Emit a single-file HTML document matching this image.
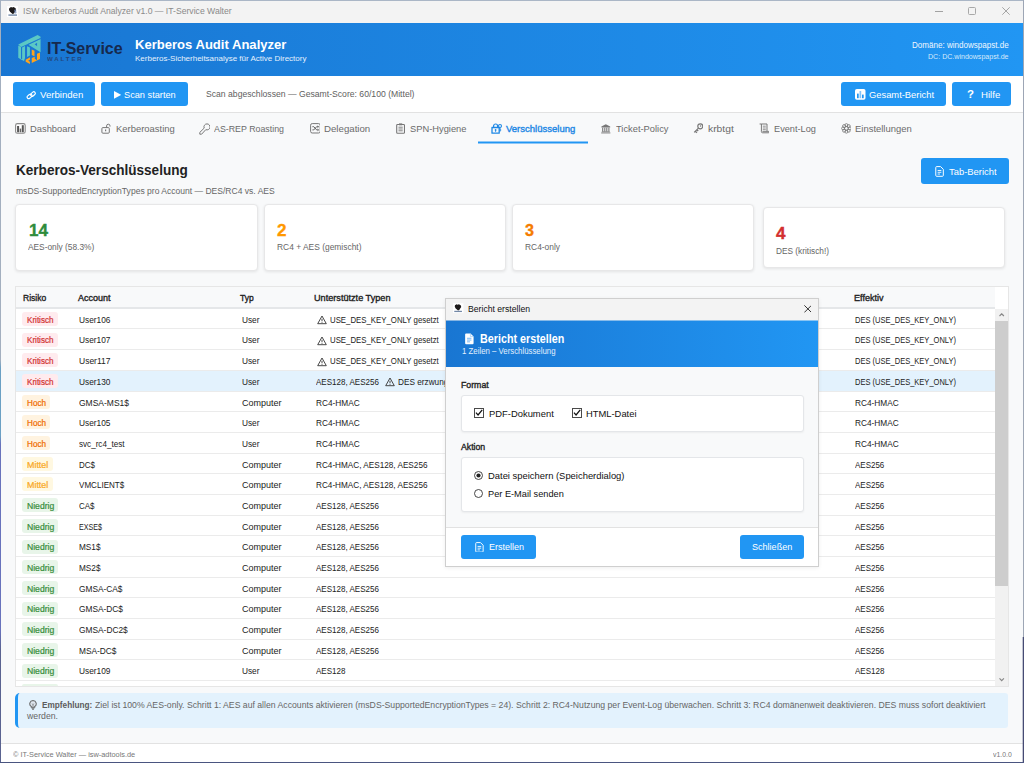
<!DOCTYPE html>
<html lang="de"><head><meta charset="utf-8"><title>ISW Kerberos Audit Analyzer</title>
<style>
*{box-sizing:border-box;margin:0;padding:0}
html,body{width:1024px;height:763px;overflow:hidden;background:#f8f9fa;font-family:"Liberation Sans",sans-serif}
#w{position:absolute;left:0;top:0;width:1024px;height:763px;overflow:hidden;background:#f8f9fa}
.ab,.t,.bx,.bd,.btn{position:absolute}
.t{white-space:pre;transform-origin:0 50%;display:block}
.btn{background:#2196f3;border-radius:3px}
.bd{height:14px;border-radius:3px}
.card{position:absolute;background:#fff;border:1px solid #e7e7e8;border-radius:4px;box-shadow:0 1px 3px rgba(0,0,0,.09)}
.rl{position:absolute;left:16px;width:979px;height:1px;background:#ebebeb}
</style></head><body><div id="w">
<!-- title bar -->
<div class="ab" style="left:0;top:0;width:1024px;height:23px;background:#f3f3f3"></div>
<!-- header -->
<div class="ab" style="left:0;top:23px;width:1024px;height:53px;background:linear-gradient(90deg,#1976d2 0%,#2196f3 100%)"></div>
<!-- toolbar -->
<div class="ab" style="left:0;top:76px;width:1024px;height:37px;background:#fff;border-bottom:1px solid #e2e2e2"></div>
<div class="btn" style="left:13px;top:82px;width:82px;height:24px"></div>
<div class="btn" style="left:101px;top:82px;width:87px;height:24px"></div>
<div class="btn" style="left:841px;top:82px;width:105px;height:24px"></div>
<div class="btn" style="left:952px;top:82px;width:59px;height:24px"></div>
<!-- tabs -->
<div class="ab" style="left:478px;top:141px;width:109.5px;height:3px;background:rgba(33,150,243,.5)"></div><div class="ab" style="left:478px;top:142px;width:109.5px;height:1px;background:#2196f3"></div>
<!-- tab-bericht -->
<div class="btn" style="left:921px;top:158px;width:87.5px;height:26px"></div>
<!-- cards -->
<div class="card" style="left:15px;top:204px;width:243px;height:66.5px"></div>
<div class="card" style="left:264px;top:204px;width:242px;height:66.5px"></div>
<div class="card" style="left:512px;top:204px;width:242px;height:66.5px"></div>
<div class="card" style="left:763px;top:207px;width:242px;height:61px"></div>
<!-- table -->
<div class="ab" style="left:15px;top:286px;width:994px;height:400.5px;background:#fff;border:1px solid #e6e6e6;overflow:hidden"></div>
<div class="ab" style="left:16px;top:287px;width:979px;height:20.5px;background:#f8f9fa"></div>
<div class="ab" style="left:16px;top:307px;width:979px;height:2px;background:#e5e7e9"></div>
<div class="ab" style="left:16px;top:371px;width:979px;height:20px;background:#e3f2fd"></div>
<div class="rl" style="top:328px"></div><div class="rl" style="top:349px"></div><div class="rl" style="top:370px"></div><div class="rl" style="top:391px"></div><div class="rl" style="top:411px"></div><div class="rl" style="top:432px"></div><div class="rl" style="top:453px"></div><div class="rl" style="top:473px"></div><div class="rl" style="top:494px"></div><div class="rl" style="top:515px"></div><div class="rl" style="top:535px"></div><div class="rl" style="top:556px"></div><div class="rl" style="top:577px"></div><div class="rl" style="top:597px"></div><div class="rl" style="top:618px"></div><div class="rl" style="top:639px"></div><div class="rl" style="top:659px"></div><div class="rl" style="top:680px"></div>
<!-- scrollbar -->
<div class="ab" style="left:995px;top:309px;width:13px;height:377px;background:#f1f1f1"></div>
<div class="ab" style="left:995px;top:321px;width:13px;height:264.5px;background:#cdcdcd"></div>
<div class="bd" style="left:22px;top:312px;width:36px;background:#ffebee"></div><svg class="ab" style="left:316.5px;top:315.25px" width="10" height="10" viewBox="0 0 10 10"><path d="M5 1 L9.3 8.7 H0.7 Z" fill="none" stroke="#333" stroke-width="0.9" stroke-linejoin="round"/><path d="M5 3.8V6.3M5 7.2V7.9" stroke="#333" stroke-width="0.9"/></svg><div class="bd" style="left:22px;top:333px;width:36px;background:#ffebee"></div><svg class="ab" style="left:316.5px;top:335.94px" width="10" height="10" viewBox="0 0 10 10"><path d="M5 1 L9.3 8.7 H0.7 Z" fill="none" stroke="#333" stroke-width="0.9" stroke-linejoin="round"/><path d="M5 3.8V6.3M5 7.2V7.9" stroke="#333" stroke-width="0.9"/></svg><div class="bd" style="left:22px;top:353px;width:36px;background:#ffebee"></div><svg class="ab" style="left:316.5px;top:356.63px" width="10" height="10" viewBox="0 0 10 10"><path d="M5 1 L9.3 8.7 H0.7 Z" fill="none" stroke="#333" stroke-width="0.9" stroke-linejoin="round"/><path d="M5 3.8V6.3M5 7.2V7.9" stroke="#333" stroke-width="0.9"/></svg><div class="bd" style="left:22px;top:374px;width:36px;background:#ffebee"></div><svg class="ab" style="left:384.5px;top:377.32px" width="10" height="10" viewBox="0 0 10 10"><path d="M5 1 L9.3 8.7 H0.7 Z" fill="none" stroke="#333" stroke-width="0.9" stroke-linejoin="round"/><path d="M5 3.8V6.3M5 7.2V7.9" stroke="#333" stroke-width="0.9"/></svg><div class="bd" style="left:22px;top:395px;width:28px;background:#fff3e0"></div><div class="bd" style="left:22px;top:415px;width:28px;background:#fff3e0"></div><div class="bd" style="left:22px;top:436px;width:28px;background:#fff3e0"></div><div class="bd" style="left:22px;top:457px;width:31px;background:#fff8e1"></div><div class="bd" style="left:22px;top:477px;width:31px;background:#fff8e1"></div><div class="bd" style="left:22px;top:498px;width:36px;background:#e8f5e9"></div><div class="bd" style="left:22px;top:519px;width:36px;background:#e8f5e9"></div><div class="bd" style="left:22px;top:540px;width:36px;background:#e8f5e9"></div><div class="bd" style="left:22px;top:560px;width:36px;background:#e8f5e9"></div><div class="bd" style="left:22px;top:581px;width:36px;background:#e8f5e9"></div><div class="bd" style="left:22px;top:602px;width:36px;background:#e8f5e9"></div><div class="bd" style="left:22px;top:622px;width:36px;background:#e8f5e9"></div><div class="bd" style="left:22px;top:643px;width:36px;background:#e8f5e9"></div><div class="bd" style="left:22px;top:664px;width:36px;background:#e8f5e9"></div><div class="ab" style="left:22px;top:684px;width:36px;height:2px;background:#e8f5e9;border-radius:2px 2px 0 0"></div>
<!-- recommendation -->
<div class="ab" style="left:15px;top:693px;width:993px;height:35px;background:#e3f2fd;border-left:3px solid #2196f3;border-radius:5px 3px 3px 5px"></div>
<!-- footer -->
<div class="ab" style="left:0;top:743px;width:1024px;height:20px;background:#fff;border-top:1px solid #e2e2e2"></div>
<span class="t" style="left:22.70px;top:4.30px;font-size:9.7px;line-height:14px;color:#8a8a8a;transform:scaleX(0.8904)">ISW Kerberos Audit Analyzer v1.0 — IT-Service Walter</span>
<span class="t" style="left:46.50px;top:37.80px;font-size:15.9px;line-height:22px;color:#16294d;transform:scaleX(1.0081);font-weight:700">IT-Service</span>
<span class="t" style="left:47.20px;top:56.10px;font-size:4.9px;line-height:7px;color:#23477e;transform:scaleX(1.2500);font-weight:700;letter-spacing:1.509px">WALTER</span>
<span class="t" style="left:135.40px;top:34.70px;font-size:13.5px;line-height:19px;color:#fff;transform:scaleX(0.9671);font-weight:700">Kerberos Audit Analyzer</span>
<span class="t" style="left:135.40px;top:53.10px;font-size:8.0px;line-height:11px;color:#e6f1fc;transform:scaleX(0.9987)">Kerberos-Sicherheitsanalyse für Active Directory</span>
<span class="t" style="left:911.75px;top:39.20px;font-size:8.8px;line-height:12px;color:#f0f7fe;transform:scaleX(0.9160)">Domäne: windowspapst.de</span>
<span class="t" style="left:928.00px;top:50.50px;font-size:7.6px;line-height:11px;color:#d6e9fb;transform:scaleX(0.9303)">DC: DC.windowspapst.de</span>
<span class="t" style="left:40.30px;top:87.60px;font-size:9.8px;line-height:14px;color:#fff;transform:scaleX(0.9813)">Verbinden</span>
<span class="t" style="left:123.90px;top:87.60px;font-size:9.8px;line-height:14px;color:#fff;transform:scaleX(0.9397)">Scan starten</span>
<span class="t" style="left:205.50px;top:88.40px;font-size:8.8px;line-height:12px;color:#606060;transform:scaleX(0.9802)">Scan abgeschlossen — Gesamt-Score: 60/100 (Mittel)</span>
<span class="t" style="left:869.25px;top:87.60px;font-size:9.8px;line-height:14px;color:#fff;transform:scaleX(0.9550)">Gesamt-Bericht</span>
<span class="t" style="left:967.25px;top:87.30px;font-size:11px;line-height:15px;color:#fff;transform:scaleX(1.0394);font-weight:700">?</span>
<span class="t" style="left:980.50px;top:87.60px;font-size:9.8px;line-height:14px;color:#fff;transform:scaleX(0.9817)">Hilfe</span>
<span class="t" style="left:30.00px;top:121.80px;font-size:9.8px;line-height:14px;color:#6b6b6b;transform:scaleX(0.9544)">Dashboard</span>
<span class="t" style="left:115.50px;top:121.80px;font-size:9.8px;line-height:14px;color:#6b6b6b;transform:scaleX(0.9631)">Kerberoasting</span>
<span class="t" style="left:214.00px;top:121.80px;font-size:9.8px;line-height:14px;color:#6b6b6b;transform:scaleX(0.9010)">AS-REP Roasting</span>
<span class="t" style="left:324.00px;top:121.80px;font-size:9.8px;line-height:14px;color:#6b6b6b;transform:scaleX(0.9873)">Delegation</span>
<span class="t" style="left:409.50px;top:121.80px;font-size:9.8px;line-height:14px;color:#6b6b6b;transform:scaleX(0.9518)">SPN-Hygiene</span>
<span class="t" style="left:615.50px;top:121.80px;font-size:9.8px;line-height:14px;color:#6b6b6b;transform:scaleX(0.9516)">Ticket-Policy</span>
<span class="t" style="left:707.50px;top:121.80px;font-size:9.8px;line-height:14px;color:#6b6b6b;transform:scaleX(1.0504)">krbtgt</span>
<span class="t" style="left:773.50px;top:121.80px;font-size:9.8px;line-height:14px;color:#6b6b6b;transform:scaleX(0.9402)">Event-Log</span>
<span class="t" style="left:855.00px;top:121.80px;font-size:9.8px;line-height:14px;color:#6b6b6b;transform:scaleX(0.9647)">Einstellungen</span>
<span class="t" style="left:506.00px;top:121.80px;font-size:9.8px;line-height:14px;color:#1e88e5;transform:scaleX(0.9707);-webkit-text-stroke:.4px #1e88e5">Verschlüsselung</span>
<span class="t" style="left:15.75px;top:158.70px;font-size:15px;line-height:21px;color:#222;transform:scaleX(0.9036);font-weight:700">Kerberos-Verschlüsselung</span>
<span class="t" style="left:15.75px;top:184.60px;font-size:8.3px;line-height:12px;color:#666;transform:scaleX(1.0295)">msDS-SupportedEncryptionTypes pro Account — DES/RC4 vs. AES</span>
<span class="t" style="left:949.25px;top:164.60px;font-size:9.8px;line-height:14px;color:#fff;transform:scaleX(0.9584)">Tab-Bericht</span>
<span class="t" style="left:29.00px;top:219.10px;font-size:16.4px;line-height:23px;color:#2e8c3c;transform:scaleX(1.0420);font-weight:700;-webkit-text-stroke:.35px #2e8c3c">14</span>
<span class="t" style="left:28.25px;top:241.40px;font-size:8.8px;line-height:12px;color:#666;transform:scaleX(0.9475)">AES-only (58.3%)</span>
<span class="t" style="left:276.50px;top:219.10px;font-size:16.4px;line-height:23px;color:#ff9800;transform:scaleX(1.0411);font-weight:700;-webkit-text-stroke:.35px #ff9800">2</span>
<span class="t" style="left:276.50px;top:241.40px;font-size:8.8px;line-height:12px;color:#666;transform:scaleX(0.9575)">RC4 + AES (gemischt)</span>
<span class="t" style="left:525.00px;top:219.10px;font-size:16.4px;line-height:23px;color:#f57c00;transform:scaleX(0.9863);font-weight:700;-webkit-text-stroke:.35px #f57c00">3</span>
<span class="t" style="left:525.00px;top:241.40px;font-size:8.8px;line-height:12px;color:#666;transform:scaleX(0.9544)">RC4-only</span>
<span class="t" style="left:776.00px;top:223.40px;font-size:15.8px;line-height:22px;color:#d32f2f;transform:scaleX(1.0799);font-weight:700;-webkit-text-stroke:.35px #d32f2f">4</span>
<span class="t" style="left:776.00px;top:244.80px;font-size:8.5px;line-height:12px;color:#666;transform:scaleX(0.9758)">DES (kritisch!)</span>
<span class="t" style="left:22.50px;top:291.80px;font-size:9.2px;line-height:13px;color:#222;transform:scaleX(0.9294);-webkit-text-stroke:.36px #222">Risiko</span>
<span class="t" style="left:77.75px;top:291.80px;font-size:9.2px;line-height:13px;color:#222;transform:scaleX(0.9788);-webkit-text-stroke:.36px #222">Account</span>
<span class="t" style="left:239.90px;top:291.80px;font-size:9.2px;line-height:13px;color:#222;transform:scaleX(0.9249);-webkit-text-stroke:.36px #222">Typ</span>
<span class="t" style="left:314.00px;top:291.80px;font-size:9.2px;line-height:13px;color:#222;transform:scaleX(0.9941);-webkit-text-stroke:.36px #222">Unterstützte Typen</span>
<span class="t" style="left:853.50px;top:291.80px;font-size:9.2px;line-height:13px;color:#222;transform:scaleX(0.9844);-webkit-text-stroke:.36px #222">Effektiv</span>
<span class="t" style="left:26.75px;top:313.75px;font-size:8.3px;line-height:12px;color:#d23434;transform:scaleX(0.9742);-webkit-text-stroke:.22px #d23434">Kritisch</span>
<span class="t" style="left:79.25px;top:313.75px;font-size:9px;line-height:13px;color:#222;transform:scaleX(0.9256)">User106</span>
<span class="t" style="left:241.50px;top:313.75px;font-size:9px;line-height:13px;color:#222;transform:scaleX(0.9203)">User</span>
<span class="t" style="left:330.25px;top:313.75px;font-size:9px;line-height:13px;color:#222;transform:scaleX(0.8684)">USE_DES_KEY_ONLY gesetzt</span>
<span class="t" style="left:855.00px;top:313.75px;font-size:9px;line-height:13px;color:#222;transform:scaleX(0.8355)">DES (USE_DES_KEY_ONLY)</span>
<span class="t" style="left:26.75px;top:334.44px;font-size:8.3px;line-height:12px;color:#d23434;transform:scaleX(0.9742);-webkit-text-stroke:.22px #d23434">Kritisch</span>
<span class="t" style="left:79.25px;top:334.44px;font-size:9px;line-height:13px;color:#222;transform:scaleX(0.9256)">User107</span>
<span class="t" style="left:241.50px;top:334.44px;font-size:9px;line-height:13px;color:#222;transform:scaleX(0.9203)">User</span>
<span class="t" style="left:330.25px;top:334.44px;font-size:9px;line-height:13px;color:#222;transform:scaleX(0.8684)">USE_DES_KEY_ONLY gesetzt</span>
<span class="t" style="left:855.00px;top:334.44px;font-size:9px;line-height:13px;color:#222;transform:scaleX(0.8355)">DES (USE_DES_KEY_ONLY)</span>
<span class="t" style="left:26.75px;top:355.13px;font-size:8.3px;line-height:12px;color:#d23434;transform:scaleX(0.9742);-webkit-text-stroke:.22px #d23434">Kritisch</span>
<span class="t" style="left:79.25px;top:355.13px;font-size:9px;line-height:13px;color:#222;transform:scaleX(0.9443)">User117</span>
<span class="t" style="left:241.50px;top:355.13px;font-size:9px;line-height:13px;color:#222;transform:scaleX(0.9203)">User</span>
<span class="t" style="left:330.25px;top:355.13px;font-size:9px;line-height:13px;color:#222;transform:scaleX(0.8684)">USE_DES_KEY_ONLY gesetzt</span>
<span class="t" style="left:855.00px;top:355.13px;font-size:9px;line-height:13px;color:#222;transform:scaleX(0.8355)">DES (USE_DES_KEY_ONLY)</span>
<span class="t" style="left:26.75px;top:375.82px;font-size:8.3px;line-height:12px;color:#d23434;transform:scaleX(0.9742);-webkit-text-stroke:.22px #d23434">Kritisch</span>
<span class="t" style="left:79.25px;top:375.82px;font-size:9px;line-height:13px;color:#222;transform:scaleX(0.9256)">User130</span>
<span class="t" style="left:241.50px;top:375.82px;font-size:9px;line-height:13px;color:#222;transform:scaleX(0.9203)">User</span>
<span class="t" style="left:315.50px;top:375.82px;font-size:9px;line-height:13px;color:#222;transform:scaleX(0.8928)">AES128, AES256</span>
<span class="t" style="left:398.00px;top:375.82px;font-size:9px;line-height:13px;color:#222;transform:scaleX(0.9147)">DES erzwungen</span>
<span class="t" style="left:855.00px;top:375.82px;font-size:9px;line-height:13px;color:#222;transform:scaleX(0.8355)">DES (USE_DES_KEY_ONLY)</span>
<span class="t" style="left:26.75px;top:396.51px;font-size:8.3px;line-height:12px;color:#ef6c00;transform:scaleX(0.9806);-webkit-text-stroke:.22px #ef6c00">Hoch</span>
<span class="t" style="left:79.25px;top:396.51px;font-size:9px;line-height:13px;color:#222;transform:scaleX(0.9431)">GMSA-MS1$</span>
<span class="t" style="left:241.50px;top:396.51px;font-size:9px;line-height:13px;color:#222;transform:scaleX(0.9996)">Computer</span>
<span class="t" style="left:315.50px;top:396.51px;font-size:9px;line-height:13px;color:#222;transform:scaleX(0.9207)">RC4-HMAC</span>
<span class="t" style="left:855.00px;top:396.51px;font-size:9px;line-height:13px;color:#222;transform:scaleX(0.9207)">RC4-HMAC</span>
<span class="t" style="left:26.75px;top:417.20px;font-size:8.3px;line-height:12px;color:#ef6c00;transform:scaleX(0.9806);-webkit-text-stroke:.22px #ef6c00">Hoch</span>
<span class="t" style="left:79.25px;top:417.20px;font-size:9px;line-height:13px;color:#222;transform:scaleX(0.9256)">User105</span>
<span class="t" style="left:241.50px;top:417.20px;font-size:9px;line-height:13px;color:#222;transform:scaleX(0.9203)">User</span>
<span class="t" style="left:315.50px;top:417.20px;font-size:9px;line-height:13px;color:#222;transform:scaleX(0.9207)">RC4-HMAC</span>
<span class="t" style="left:855.00px;top:417.20px;font-size:9px;line-height:13px;color:#222;transform:scaleX(0.9207)">RC4-HMAC</span>
<span class="t" style="left:26.75px;top:437.89px;font-size:8.3px;line-height:12px;color:#ef6c00;transform:scaleX(0.9806);-webkit-text-stroke:.22px #ef6c00">Hoch</span>
<span class="t" style="left:79.25px;top:437.89px;font-size:9px;line-height:13px;color:#222;transform:scaleX(0.9004)">svc_rc4_test</span>
<span class="t" style="left:241.50px;top:437.89px;font-size:9px;line-height:13px;color:#222;transform:scaleX(0.9203)">User</span>
<span class="t" style="left:315.50px;top:437.89px;font-size:9px;line-height:13px;color:#222;transform:scaleX(0.9207)">RC4-HMAC</span>
<span class="t" style="left:855.00px;top:437.89px;font-size:9px;line-height:13px;color:#222;transform:scaleX(0.9207)">RC4-HMAC</span>
<span class="t" style="left:26.75px;top:458.58px;font-size:8.3px;line-height:12px;color:#f9a825;transform:scaleX(1.0717);-webkit-text-stroke:.22px #f9a825">Mittel</span>
<span class="t" style="left:79.25px;top:458.58px;font-size:9px;line-height:13px;color:#222;transform:scaleX(0.8881)">DC$</span>
<span class="t" style="left:241.50px;top:458.58px;font-size:9px;line-height:13px;color:#222;transform:scaleX(0.9996)">Computer</span>
<span class="t" style="left:315.50px;top:458.58px;font-size:9px;line-height:13px;color:#222;transform:scaleX(0.9097)">RC4-HMAC, AES128, AES256</span>
<span class="t" style="left:855.00px;top:458.58px;font-size:9px;line-height:13px;color:#222;transform:scaleX(0.8855)">AES256</span>
<span class="t" style="left:26.75px;top:479.27px;font-size:8.3px;line-height:12px;color:#f9a825;transform:scaleX(1.0717);-webkit-text-stroke:.22px #f9a825">Mittel</span>
<span class="t" style="left:79.25px;top:479.27px;font-size:9px;line-height:13px;color:#222;transform:scaleX(0.8958)">VMCLIENT$</span>
<span class="t" style="left:241.50px;top:479.27px;font-size:9px;line-height:13px;color:#222;transform:scaleX(0.9996)">Computer</span>
<span class="t" style="left:315.50px;top:479.27px;font-size:9px;line-height:13px;color:#222;transform:scaleX(0.9097)">RC4-HMAC, AES128, AES256</span>
<span class="t" style="left:855.00px;top:479.27px;font-size:9px;line-height:13px;color:#222;transform:scaleX(0.8855)">AES256</span>
<span class="t" style="left:26.75px;top:499.96px;font-size:8.3px;line-height:12px;color:#388e3c;transform:scaleX(1.0362);-webkit-text-stroke:.22px #388e3c">Niedrig</span>
<span class="t" style="left:79.25px;top:499.96px;font-size:9px;line-height:13px;color:#222;transform:scaleX(0.8849)">CA$</span>
<span class="t" style="left:241.50px;top:499.96px;font-size:9px;line-height:13px;color:#222;transform:scaleX(0.9996)">Computer</span>
<span class="t" style="left:315.50px;top:499.96px;font-size:9px;line-height:13px;color:#222;transform:scaleX(0.8928)">AES128, AES256</span>
<span class="t" style="left:855.00px;top:499.96px;font-size:9px;line-height:13px;color:#222;transform:scaleX(0.8855)">AES256</span>
<span class="t" style="left:26.75px;top:520.65px;font-size:8.3px;line-height:12px;color:#388e3c;transform:scaleX(1.0362);-webkit-text-stroke:.22px #388e3c">Niedrig</span>
<span class="t" style="left:79.25px;top:520.65px;font-size:9px;line-height:13px;color:#222;transform:scaleX(0.7922)">EXSE$</span>
<span class="t" style="left:241.50px;top:520.65px;font-size:9px;line-height:13px;color:#222;transform:scaleX(0.9996)">Computer</span>
<span class="t" style="left:315.50px;top:520.65px;font-size:9px;line-height:13px;color:#222;transform:scaleX(0.8928)">AES128, AES256</span>
<span class="t" style="left:855.00px;top:520.65px;font-size:9px;line-height:13px;color:#222;transform:scaleX(0.8855)">AES256</span>
<span class="t" style="left:26.75px;top:541.34px;font-size:8.3px;line-height:12px;color:#388e3c;transform:scaleX(1.0362);-webkit-text-stroke:.22px #388e3c">Niedrig</span>
<span class="t" style="left:79.25px;top:541.34px;font-size:9px;line-height:13px;color:#222;transform:scaleX(0.9143)">MS1$</span>
<span class="t" style="left:241.50px;top:541.34px;font-size:9px;line-height:13px;color:#222;transform:scaleX(0.9996)">Computer</span>
<span class="t" style="left:315.50px;top:541.34px;font-size:9px;line-height:13px;color:#222;transform:scaleX(0.8928)">AES128, AES256</span>
<span class="t" style="left:855.00px;top:541.34px;font-size:9px;line-height:13px;color:#222;transform:scaleX(0.8855)">AES256</span>
<span class="t" style="left:26.75px;top:562.03px;font-size:8.3px;line-height:12px;color:#388e3c;transform:scaleX(1.0362);-webkit-text-stroke:.22px #388e3c">Niedrig</span>
<span class="t" style="left:79.25px;top:562.03px;font-size:9px;line-height:13px;color:#222;transform:scaleX(0.9143)">MS2$</span>
<span class="t" style="left:241.50px;top:562.03px;font-size:9px;line-height:13px;color:#222;transform:scaleX(0.9996)">Computer</span>
<span class="t" style="left:315.50px;top:562.03px;font-size:9px;line-height:13px;color:#222;transform:scaleX(0.8928)">AES128, AES256</span>
<span class="t" style="left:855.00px;top:562.03px;font-size:9px;line-height:13px;color:#222;transform:scaleX(0.8855)">AES256</span>
<span class="t" style="left:26.75px;top:582.72px;font-size:8.3px;line-height:12px;color:#388e3c;transform:scaleX(1.0362);-webkit-text-stroke:.22px #388e3c">Niedrig</span>
<span class="t" style="left:79.25px;top:582.72px;font-size:9px;line-height:13px;color:#222;transform:scaleX(0.9252)">GMSA-CA$</span>
<span class="t" style="left:241.50px;top:582.72px;font-size:9px;line-height:13px;color:#222;transform:scaleX(0.9996)">Computer</span>
<span class="t" style="left:315.50px;top:582.72px;font-size:9px;line-height:13px;color:#222;transform:scaleX(0.8928)">AES128, AES256</span>
<span class="t" style="left:855.00px;top:582.72px;font-size:9px;line-height:13px;color:#222;transform:scaleX(0.8855)">AES256</span>
<span class="t" style="left:26.75px;top:603.41px;font-size:8.3px;line-height:12px;color:#388e3c;transform:scaleX(1.0362);-webkit-text-stroke:.22px #388e3c">Niedrig</span>
<span class="t" style="left:79.25px;top:603.41px;font-size:9px;line-height:13px;color:#222;transform:scaleX(0.9260)">GMSA-DC$</span>
<span class="t" style="left:241.50px;top:603.41px;font-size:9px;line-height:13px;color:#222;transform:scaleX(0.9996)">Computer</span>
<span class="t" style="left:315.50px;top:603.41px;font-size:9px;line-height:13px;color:#222;transform:scaleX(0.8928)">AES128, AES256</span>
<span class="t" style="left:855.00px;top:603.41px;font-size:9px;line-height:13px;color:#222;transform:scaleX(0.8855)">AES256</span>
<span class="t" style="left:26.75px;top:624.10px;font-size:8.3px;line-height:12px;color:#388e3c;transform:scaleX(1.0362);-webkit-text-stroke:.22px #388e3c">Niedrig</span>
<span class="t" style="left:79.25px;top:624.10px;font-size:9px;line-height:13px;color:#222;transform:scaleX(0.9283)">GMSA-DC2$</span>
<span class="t" style="left:241.50px;top:624.10px;font-size:9px;line-height:13px;color:#222;transform:scaleX(0.9996)">Computer</span>
<span class="t" style="left:315.50px;top:624.10px;font-size:9px;line-height:13px;color:#222;transform:scaleX(0.8928)">AES128, AES256</span>
<span class="t" style="left:855.00px;top:624.10px;font-size:9px;line-height:13px;color:#222;transform:scaleX(0.8855)">AES256</span>
<span class="t" style="left:26.75px;top:644.79px;font-size:8.3px;line-height:12px;color:#388e3c;transform:scaleX(1.0362);-webkit-text-stroke:.22px #388e3c">Niedrig</span>
<span class="t" style="left:79.25px;top:644.79px;font-size:9px;line-height:13px;color:#222;transform:scaleX(0.9256)">MSA-DC$</span>
<span class="t" style="left:241.50px;top:644.79px;font-size:9px;line-height:13px;color:#222;transform:scaleX(0.9996)">Computer</span>
<span class="t" style="left:315.50px;top:644.79px;font-size:9px;line-height:13px;color:#222;transform:scaleX(0.8928)">AES128, AES256</span>
<span class="t" style="left:855.00px;top:644.79px;font-size:9px;line-height:13px;color:#222;transform:scaleX(0.8855)">AES256</span>
<span class="t" style="left:26.75px;top:665.48px;font-size:8.3px;line-height:12px;color:#388e3c;transform:scaleX(1.0362);-webkit-text-stroke:.22px #388e3c">Niedrig</span>
<span class="t" style="left:79.25px;top:665.48px;font-size:9px;line-height:13px;color:#222;transform:scaleX(0.9256)">User109</span>
<span class="t" style="left:241.50px;top:665.48px;font-size:9px;line-height:13px;color:#222;transform:scaleX(0.9203)">User</span>
<span class="t" style="left:315.50px;top:665.48px;font-size:9px;line-height:13px;color:#222;transform:scaleX(0.8931)">AES128</span>
<span class="t" style="left:855.00px;top:665.48px;font-size:9px;line-height:13px;color:#222;transform:scaleX(0.8931)">AES128</span>
<span class="t" style="left:41.80px;top:698.70px;font-size:9.0px;line-height:13px;color:#5c5c5c;transform:scaleX(0.9145);font-weight:700">Empfehlung:</span>
<span class="t" style="left:94.50px;top:698.70px;font-size:9.0px;line-height:13px;color:#666;transform:scaleX(0.9637)">Ziel ist 100% AES-only. Schritt 1: AES auf allen Accounts aktivieren (msDS-SupportedEncryptionTypes = 24). Schritt 2: RC4-Nutzung per Event-Log überwachen. Schritt 3: RC4 domänenweit deaktivieren. DES muss sofort deaktiviert</span>
<span class="t" style="left:26.50px;top:710.40px;font-size:9.0px;line-height:13px;color:#666;transform:scaleX(0.9678)">werden.</span>
<span class="t" style="left:12.80px;top:748.50px;font-size:7.7px;line-height:11px;color:#777;transform:scaleX(0.9580)">© IT-Service Walter — isw-adtools.de</span>
<span class="t" style="left:993.00px;top:748.50px;font-size:7.7px;line-height:11px;color:#777;transform:scaleX(0.8949)">v1.0.0</span>
<svg class="ab" style="left:6.8px;top:5.5px" width="11.6" height="11" viewBox="0 0 116 110"><rect width="116" height="110" fill="#fff"/><path d="M22 22 L40 10 L52 16 L66 10 L86 22 L92 42 L80 58 L70 74 L56 80 L44 70 L30 58 L20 40Z" fill="#1d1a1a"/><path d="M70 40 L88 30 L96 70 L78 78Z" fill="#6b84b3" opacity=".7"/><rect x="14" y="84" width="86" height="14" fill="#5b7396" opacity=".85"/></svg><div class="ab" style="left:935px;top:11px;width:8px;height:1px;background:#a2a2a2"></div><div class="ab" style="left:968px;top:7px;width:8px;height:8px;border:1px solid #a8a8a8;border-radius:1.5px"></div><svg class="ab" style="left:1002px;top:7px" width="8" height="8" viewBox="0 0 8 8"><path d="M.3 .3L7.7 7.7M7.7 .3L.3 7.7" stroke="#9c9c9c" stroke-width=".9"/></svg><svg class="ab" style="left:10px;top:28px" width="50" height="42" viewBox="0 0 908 763"><g fill="#5bc8c5">
<path d="M150 300L500 125L555 160V185L200 345Z"/>
<path d="M335 305L555 200V440Z"/>
<path d="M150 318L200 343V572L150 542Z"/>
<path d="M220 352L272 328V545L255 600L200 572V560L220 568Z"/>
<path d="M310 330L362 356V500L310 528Z"/>
</g>
<path d="M448 296L492 268V330Z" fill="#1b78d4"/><path d="M322 300L560 186" stroke="#1b78d4" stroke-width="12"/>
<g fill="#ffa41c">
<path d="M395 390L445 415V512L395 492Z"/>
<path d="M490 470L545 445V562L395 636V545L450 522V560L490 585Z"/>
<path d="M285 576L362 530V655L285 612Z"/>
</g>
<path d="M330 595L362 575V615Z" fill="#1b78d4"/></svg><svg class="ab" style="left:26px;top:89.5px" width="10.5" height="10.5" viewBox="0 0 21 21"><g fill="none" stroke="#fff" stroke-width="2.3" stroke-linecap="round"><rect x="1.8" y="9.6" width="10.6" height="6.2" rx="3.1" transform="rotate(-40 7.1 12.7)"/><rect x="8.6" y="5" width="10.6" height="6.2" rx="3.1" transform="rotate(-40 13.9 8.1)"/></g></svg><svg class="ab" style="left:113.8px;top:90.8px" width="7.2" height="7.8" viewBox="0 0 7.2 7.8"><path d="M0 0L7.2 3.9L0 7.8Z" fill="#fff"/></svg><svg class="ab" style="left:855px;top:89px" width="10.5" height="10.8" viewBox="0 0 10.5 10.8"><rect width="10.5" height="10.8" rx="1.8" fill="#fff"/><rect x="2" y="4.6" width="1.7" height="4.6" fill="#2196f3"/><rect x="4.5" y="2" width="1.7" height="7.2" fill="#2196f3" opacity=".55"/><rect x="7" y="5.6" width="1.7" height="3.6" fill="#2196f3"/></svg><svg class="ab" style="left:935.3px;top:166.1px" width="9" height="10.8" viewBox="0 0 9 11"><path d="M1.6 .6H5.6L8.4 3.4V9.6a.9.9 0 0 1-.9.9H1.6a.9.9 0 0 1-.9-.9V1.5a.9.9 0 0 1 .9-.9Z" fill="none" stroke="#fff" stroke-width="1" stroke-linejoin="round"/><path d="M2.6 4.6H6.4M2.6 6.4H6.4M2.6 8.2H5" stroke="#fff" stroke-width=".9"/></svg><svg class="ab" style="left:15.2px;top:123.2px" width="10.8" height="10.8" viewBox="0 0 10.8 10.8"><rect x=".6" y=".6" width="9.6" height="9.6" rx="1.8" fill="#fff" stroke="#8a8a8a" stroke-width="1.1"/><rect x="2.1" y="3" width="2" height="6.3" fill="#555"/><rect x="4.7" y="5.6" width="1.5" height="3.7" fill="#666"/><rect x="6.8" y="2.2" width="2" height="7.1" fill="#555"/></svg><svg class="ab" style="left:101px;top:123px" width="10" height="11" viewBox="0 0 10 11"><rect x=".9" y="4.6" width="7.4" height="5.6" rx="1" fill="none" stroke="#777" stroke-width="1"/><path d="M5.6 4.6V2.9a1.7 1.7 0 0 1 3.4 0V3.6" fill="none" stroke="#777" stroke-width="1"/><path d="M4.6 6.6V8.3" stroke="#777" stroke-width="1.2"/></svg><svg class="ab" style="left:198.6px;top:122.6px" width="11.8" height="12" viewBox="0 0 11.8 12"><path d="M8 .9a3 3 0 1 1-1.2 5.75L2.6 11.2H.8V9.4L5.2 5.1A3 3 0 0 1 8 .9Z" fill="none" stroke="#777" stroke-width="1" stroke-linejoin="round"/></svg><svg class="ab" style="left:309.5px;top:123.3px" width="10.8" height="10.6" viewBox="0 0 10.8 10.6"><rect x=".6" y=".6" width="9.6" height="9.4" rx="1.6" fill="none" stroke="#777" stroke-width="1"/><path d="M2.4 3.7H3.8L6.6 6.9H8.4M2.4 6.9H3.8L6.6 3.7H8.4" fill="none" stroke="#555" stroke-width=".9"/><path d="M7.6 2.9L8.6 3.7L7.6 4.5M7.6 6.1L8.6 6.9L7.6 7.7" fill="none" stroke="#555" stroke-width=".8"/></svg><svg class="ab" style="left:395.8px;top:123.2px" width="9.2" height="10.8" viewBox="0 0 9.2 10.8"><rect x=".7" y="1.5" width="7.8" height="8.7" rx=".8" fill="none" stroke="#777" stroke-width="1.1"/><rect x="3" y=".4" width="3.2" height="1.9" fill="#777"/><path d="M2.5 4.2H6.7M2.5 6H6.7M2.5 7.8H6.7" stroke="#777" stroke-width=".9"/></svg><svg class="ab" style="left:491.4px;top:123px" width="11.2" height="11" viewBox="0 0 11.2 11"><path d="M1 4.5H8.2V10.2H1Z" fill="none" stroke="#1e88e5" stroke-width="1.3" stroke-linejoin="round"/><path d="M2.6 4.5V3a2 2 0 0 1 4 0V4.5" fill="none" stroke="#1e88e5" stroke-width="1.2"/><circle cx="4.6" cy="7" r=".9" fill="#1e88e5"/><path d="M4.6 7.4V8.8" stroke="#1e88e5" stroke-width="1"/><circle cx="9" cy="3" r="1.5" fill="none" stroke="#1e88e5" stroke-width="1.1"/><path d="M9 4.5V8.6M9 7H10.2" stroke="#1e88e5" stroke-width="1.1"/></svg><svg class="ab" style="left:601px;top:124px" width="9.6" height="9.6" viewBox="0 0 9.6 9.6"><path d="M4.8 .3L9.2 2.6V3.4H.4V2.6Z" fill="#777"/><path d="M1.7 3.8V7.4M3.8 3.8V7.4M5.8 3.8V7.4M7.9 3.8V7.4" stroke="#777" stroke-width="1.1"/><rect x=".8" y="7.4" width="8" height=".8" fill="#777"/><rect x=".2" y="8.5" width="9.2" height=".9" fill="#777"/></svg><svg class="ab" style="left:692.6px;top:123.3px" width="10.6" height="10.6" viewBox="0 0 10.6 10.6"><circle cx="7.3" cy="3.3" r="2.5" fill="none" stroke="#777" stroke-width="1.2"/><circle cx="7.6" cy="3" r=".8" fill="#777"/><path d="M5.5 5.1L1.2 9.4M2.4 8.2L3.9 9.7M3.9 6.7L5.2 8" stroke="#777" stroke-width="1.3" fill="none"/></svg><svg class="ab" style="left:758.6px;top:123.3px" width="10.6" height="10.6" viewBox="0 0 10.6 10.6"><path d="M.6 1H2.4V8.6A1.2 1.2 0 0 0 3.6 9.8H9.8M2.4 1H8V8.4" fill="none" stroke="#777" stroke-width="1"/><path d="M3.4 8.4H9.9V9.8" fill="none" stroke="#777" stroke-width=".9"/><path d="M3.8 3.2H6.8M3.8 5H6.8M3.8 6.7H6.8" stroke="#777" stroke-width=".8"/></svg><svg class="ab" style="left:840.5px;top:123.4px" width="10.8" height="10.8" viewBox="0 0 10.8 10.8"><circle cx="8.70" cy="5.40" r="1.5" fill="none" stroke="#777" stroke-width=".8"/><circle cx="7.73" cy="7.73" r="1.5" fill="none" stroke="#777" stroke-width=".8"/><circle cx="5.40" cy="8.70" r="1.5" fill="none" stroke="#777" stroke-width=".8"/><circle cx="3.07" cy="7.73" r="1.5" fill="none" stroke="#777" stroke-width=".8"/><circle cx="2.10" cy="5.40" r="1.5" fill="none" stroke="#777" stroke-width=".8"/><circle cx="3.07" cy="3.07" r="1.5" fill="none" stroke="#777" stroke-width=".8"/><circle cx="5.40" cy="2.10" r="1.5" fill="none" stroke="#777" stroke-width=".8"/><circle cx="7.73" cy="3.07" r="1.5" fill="none" stroke="#777" stroke-width=".8"/><circle cx="5.4" cy="5.4" r="1.9" fill="none" stroke="#777" stroke-width=".9"/></svg><svg class="ab" style="left:28.9px;top:700px" width="8" height="9.8" viewBox="0 0 8 9.8"><path d="M4 .55a3.25 3.25 0 0 1 1.7 6V7.3H2.3V6.55A3.25 3.25 0 0 1 4 .55Z" fill="#dfe6ee" stroke="#666" stroke-width="1.05"/><path d="M3.2 3.6L4 4.6L4.8 3.6M4 4.6V6.6" fill="none" stroke="#666" stroke-width=".7"/><path d="M2.6 8.2H5.4M3.1 9.3H4.9" stroke="#666" stroke-width=".95"/></svg><svg class="ab" style="left:999.2px;top:313.2px" width="5.4" height="3.4" viewBox="0 0 5.4 3.4"><path d="M.5 3L2.7 .8L4.9 3" fill="none" stroke="#888" stroke-width="1.2"/></svg><svg class="ab" style="left:999.2px;top:678.2px" width="5.4" height="3.4" viewBox="0 0 5.4 3.4"><path d="M.5 .4L2.7 2.6L4.9 .4" fill="none" stroke="#888" stroke-width="1.2"/></svg>
<!-- dialog -->
<div class="ab" style="left:445px;top:298px;width:374px;height:268.5px;background:#f8f9fa;border:1px solid #cfcfcf;box-shadow:0 1px 4px rgba(0,0,0,.07)"></div>
<div class="ab" style="left:446px;top:299px;width:372px;height:21.5px;background:#f3f3f3"></div>
<div class="ab" style="left:446px;top:320px;width:372px;height:47px;background:linear-gradient(90deg,#1976d2 0%,#2196f3 100%)"></div><div class="ab" style="left:446px;top:320px;width:372px;height:1px;background:rgba(243,243,243,.5)"></div>
<div class="ab" style="left:461px;top:395px;width:343px;height:37px;background:#fff;border:1px solid #e4e6e9;border-radius:3px;box-shadow:0 1px 2px rgba(0,0,0,.05)"></div>
<div class="ab" style="left:461px;top:457px;width:343px;height:54.5px;background:#fff;border:1px solid #e4e6e9;border-radius:3px;box-shadow:0 1px 2px rgba(0,0,0,.05)"></div>
<div class="ab" style="left:446px;top:527px;width:372px;height:39px;background:#fff;border-top:1px solid #e2e2e2"></div>
<div class="btn" style="left:461px;top:535px;width:75.25px;height:24px"></div>
<div class="btn" style="left:739.5px;top:535px;width:64.25px;height:24px"></div>
<span class="t" style="left:468.00px;top:302.50px;font-size:9.2px;line-height:13px;color:#111;transform:scaleX(0.9412)">Bericht erstellen</span>
<span class="t" style="left:479.75px;top:331.00px;font-size:12.2px;line-height:17px;color:#fff;transform:scaleX(0.8821);font-weight:700">Bericht erstellen</span>
<span class="t" style="left:461.50px;top:346.30px;font-size:8.2px;line-height:11px;color:#e3f0fd;transform:scaleX(0.9555)">1 Zeilen – Verschlüsselung</span>
<span class="t" style="left:460.80px;top:379.10px;font-size:9.2px;line-height:13px;color:#222;transform:scaleX(0.9516);-webkit-text-stroke:.36px #222">Format</span>
<span class="t" style="left:488.50px;top:406.60px;font-size:9.8px;line-height:14px;color:#111;transform:scaleX(0.9590)">PDF-Dokument</span>
<span class="t" style="left:586.00px;top:406.60px;font-size:9.8px;line-height:14px;color:#111;transform:scaleX(0.9562)">HTML-Datei</span>
<span class="t" style="left:460.80px;top:441.10px;font-size:9.2px;line-height:13px;color:#222;transform:scaleX(0.9473);-webkit-text-stroke:.36px #222">Aktion</span>
<span class="t" style="left:488.00px;top:468.80px;font-size:9.8px;line-height:14px;color:#111;transform:scaleX(0.9603)">Datei speichern (Speicherdialog)</span>
<span class="t" style="left:488.00px;top:486.60px;font-size:9.8px;line-height:14px;color:#111;transform:scaleX(0.9399)">Per E-Mail senden</span>
<span class="t" style="left:489.00px;top:540.00px;font-size:9.8px;line-height:14px;color:#fff;transform:scaleX(0.9180)">Erstellen</span>
<span class="t" style="left:751.50px;top:540.00px;font-size:9.8px;line-height:14px;color:#fff;transform:scaleX(0.9236)">Schließen</span>
<svg class="ab" style="left:453.2px;top:303.2px" width="10.4" height="10.4" viewBox="0 0 116 110"><rect width="116" height="110" fill="#fff"/><path d="M22 22 L40 10 L52 16 L66 10 L86 22 L92 42 L80 58 L70 74 L56 80 L44 70 L30 58 L20 40Z" fill="#1d1a1a"/><rect x="14" y="84" width="86" height="14" fill="#5b7396" opacity=".85"/></svg><svg class="ab" style="left:803.7px;top:304.8px" width="7.8" height="7.8" viewBox="0 0 8.5 8.5"><path d="M.4 .4L8.1 8.1M8.1 .4L.4 8.1" stroke="#222" stroke-width="1"/></svg><svg class="ab" style="left:464px;top:333px" width="10.5" height="11.6" viewBox="0 0 9 11"><path d="M1.5 .4H5.7L8.6 3.3V9.7a.9.9 0 0 1-.9.9H1.5a.9.9 0 0 1-.9-.9V1.3a.9.9 0 0 1 .9-.9Z" fill="#fff"/><path d="M5.6 .6V3.4H8.4" fill="none" stroke="#9ccbf7" stroke-width=".7"/><path d="M2.4 5H6.6M2.4 6.7H6.6M2.4 8.4H5.2" stroke="#6fb3f3" stroke-width=".9"/></svg><div class="ab" style="left:474px;top:408px;width:10px;height:10px;background:#fff;border:1px solid #4a4a4a"></div><svg class="ab" style="left:475.1px;top:409.3px" width="8" height="7.4" viewBox="0 0 8.4 7.6"><path d="M1 3.8L3.2 6.2L7.6 .8" fill="none" stroke="#111" stroke-width="1.3"/></svg><div class="ab" style="left:572px;top:408px;width:10px;height:10px;background:#fff;border:1px solid #4a4a4a"></div><svg class="ab" style="left:573.1px;top:409.3px" width="8" height="7.4" viewBox="0 0 8.4 7.6"><path d="M1 3.8L3.2 6.2L7.6 .8" fill="none" stroke="#111" stroke-width="1.3"/></svg><svg class="ab" style="left:474px;top:470.5px" width="9" height="9" viewBox="0 0 9 9"><circle cx="4.5" cy="4.5" r="4" fill="#fff" stroke="#333" stroke-width=".9"/><circle cx="4.5" cy="4.5" r="2.1" fill="#222"/></svg><svg class="ab" style="left:474px;top:488.5px" width="9" height="9" viewBox="0 0 9 9"><circle cx="4.5" cy="4.5" r="4" fill="#fff" stroke="#333" stroke-width=".9"/></svg><svg class="ab" style="left:475.3px;top:541.6px" width="8.8" height="10.6" viewBox="0 0 9 11"><path d="M1.6 .6H5.6L8.4 3.4V9.6a.9.9 0 0 1-.9.9H1.6a.9.9 0 0 1-.9-.9V1.5a.9.9 0 0 1 .9-.9Z" fill="none" stroke="#fff" stroke-width="1" stroke-linejoin="round"/><path d="M2.6 4.6H6.4M2.6 6.4H6.4M2.6 8.2H5" stroke="#fff" stroke-width=".9"/></svg>
<!-- window edges -->
<div class="ab" style="left:0;top:0;width:1024px;height:1px;background:#aab6c6"></div><div class="ab" style="left:0;top:0;width:1px;height:763px;background:linear-gradient(180deg,#a3afbf 0,#a3afbf 360px,#6aa0c4 368px,#6aa0c4 436px,#6872bc 444px,#6872bc 630px,#5a6390 650px,#5a6390 763px)"></div><div class="ab" style="left:1023px;top:0;width:1px;height:637px;background:#9da6b5"></div><div class="ab" style="left:1023px;top:637px;width:1px;height:126px;background:#464b74"></div><div class="ab" style="left:1022px;top:637px;width:1px;height:126px;background:rgba(70,75,116,.3)"></div>
<div class="ab" style="left:0;top:762px;width:1024px;height:1px;background:#4a5580"></div>
</div></body></html>
